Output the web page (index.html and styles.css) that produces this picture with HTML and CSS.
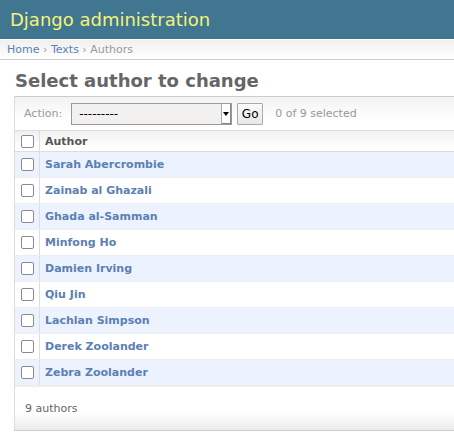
FILE: index.html
```html
<!DOCTYPE html>
<html>
<head>
<meta charset="utf-8">
<title>Select author to change | Django site admin</title>
<link rel="stylesheet" href="styles.css">
</head>
<body>
<div class="header">
  <h1 class="branding">Django administration</h1>
</div>
<div class="breadcrumbs"><a href="#">Home</a> › <a href="#">Texts</a> › Authors</div>
<div class="content">
  <h1 class="title">Select author to change</h1>
  <div class="module">
    <div class="actions">
      <label class="action-label">Action:</label>
      <span class="select-wrap">
        <select class="action-select"><option>---------</option></select>
        <span class="select-arrow"></span>
      </span>
      <button class="go-button" type="button">Go</button>
      <span class="counter">0 of 9 selected</span>
    </div>
    <table class="result-list">
      <thead>
        <tr><th class="cb-col"><input type="checkbox" class="cb"></th><th class="name-col">Author</th></tr>
      </thead>
      <tbody>
        <tr class="row1"><td class="cb-col"><input type="checkbox" class="cb"></td><td class="name-col"><a href="#">Sarah Abercrombie</a></td></tr>
        <tr class="row2"><td class="cb-col"><input type="checkbox" class="cb"></td><td class="name-col"><a href="#">Zainab al Ghazali</a></td></tr>
        <tr class="row1"><td class="cb-col"><input type="checkbox" class="cb"></td><td class="name-col"><a href="#">Ghada al-Samman</a></td></tr>
        <tr class="row2"><td class="cb-col"><input type="checkbox" class="cb"></td><td class="name-col"><a href="#">Minfong Ho</a></td></tr>
        <tr class="row1"><td class="cb-col"><input type="checkbox" class="cb"></td><td class="name-col"><a href="#">Damien Irving</a></td></tr>
        <tr class="row2"><td class="cb-col"><input type="checkbox" class="cb"></td><td class="name-col"><a href="#">Qiu Jin</a></td></tr>
        <tr class="row1"><td class="cb-col"><input type="checkbox" class="cb"></td><td class="name-col"><a href="#">Lachlan Simpson</a></td></tr>
        <tr class="row2"><td class="cb-col"><input type="checkbox" class="cb"></td><td class="name-col"><a href="#">Derek Zoolander</a></td></tr>
        <tr class="row1"><td class="cb-col"><input type="checkbox" class="cb"></td><td class="name-col"><a href="#">Zebra Zoolander</a></td></tr>
      </tbody>
    </table>
    <p class="paginator">9 authors</p>
  </div>
</div>
</body>
</html>
```
FILE: styles.css
```css
html { overflow: hidden; }
body {
  margin: 0;
  font-family: "DejaVu Sans", "Liberation Sans", sans-serif;
  font-size: 11px;
  color: #333;
  background: #fff;
}
a { color: #5b80b2; text-decoration: none; }

.header {
  background: #417690;
  height: 39px;
  display: flex;
  align-items: center;
}
.branding {
  margin: 0;
  padding: 0 10px;
  font-size: 18px;
  font-weight: normal;
  color: #f4f379;
  line-height: 22px;
}

.breadcrumbs {
  border-top: 1px solid #fff;
  border-bottom: 1px solid #ccc;
  background: linear-gradient(#f0f0f0, #fff);
  color: #999;
  font-size: 11px;
  height: 19px;
  line-height: 19px;
  padding: 0 7px;
}

.content {
  padding: 0 0 0 14px;
}
.title {
  margin: 10px 0 0 1px;
  height: 26px;
  font-size: 18px;
  line-height: 22px;
  font-weight: bold;
  color: #666;
}

.module {
  border: 1px solid #ccc;
  border-left-color: #ddd;
  border-right: none;
  background: #fff;
}

.actions {
  height: 33px;
  border-bottom: 1px solid #ddd;
  background: linear-gradient(#f3f3f3, #fff 70%);
  display: flex;
  align-items: center;
  padding-left: 9px;
  color: #999;
}
.action-label { margin-right: 9px; }
.select-wrap {
  position: relative;
  display: inline-block;
  width: 161px;
  height: 22px;
}
.action-select {
  -webkit-appearance: none;
  appearance: none;
  box-sizing: border-box;
  width: 100%;
  height: 100%;
  margin: 0;
  border: 1px solid #999;
  border-radius: 0;
  background: #f2f1f0;
  font-family: "DejaVu Sans", sans-serif;
  font-size: 12px;
  color: #000;
  padding: 0 0 0 7px;
}
.select-arrow {
  position: absolute;
  right: 1px;
  top: 1px;
  bottom: 1px;
  width: 9px;
  background: #fff;
  border-left: 1px solid #aaa;
  box-shadow: inset -1px -1px 0 #888;
}
.select-arrow::after {
  content: "";
  position: absolute;
  left: 1px;
  top: 8px;
  border-left: 3.5px solid transparent;
  border-right: 3.5px solid transparent;
  border-top: 4px solid #000;
}
.go-button {
  margin-left: 5px;
  width: 26px;
  height: 22px;
  padding: 0;
  border: 1px solid #aaa;
  border-radius: 1px;
  background: linear-gradient(#fafafa, #e8e8e8);
  font-family: "DejaVu Sans", sans-serif;
  font-size: 12px;
  color: #000;
}
.counter { margin-left: 12px; font-size: 11px; color: #999; }

.result-list {
  width: 100%;
  border-collapse: collapse;
}
.result-list th,
.result-list td {
  padding: 0;
  font-size: 11px;
  text-align: left;
  vertical-align: middle;
}
.result-list thead th {
  height: 20px;
  border-bottom: 1px solid #ddd;
  background: linear-gradient(#f0f0f0, #fff 80%);
  color: #555;
  font-weight: bold;
}
.result-list td {
  height: 25px;
  border-bottom: 1px solid #eee;
}
.result-list .cb-col {
  width: 18px;
  border-right: 1px solid #ddd;
  padding-left: 6px;
  box-sizing: content-box;
}
.result-list .name-col { padding-left: 5px; }
.result-list td a { font-weight: bold; }
.row1 { background: #edf3fe; }
.row2 { background: #fff; }

.cb {
  -webkit-appearance: none;
  appearance: none;
  display: block;
  box-sizing: border-box;
  width: 13px;
  height: 13px;
  margin: 0;
  border: 1px solid #8a8a8a;
  border-radius: 2px;
  background: #fff;
}

.paginator {
  margin: 0;
  height: 44px;
  line-height: 44px;
  padding-left: 10px;
  color: #666;
  background: linear-gradient(#fff 60%, #eaeaea);
  border-top: 1px solid #eee;
  box-sizing: border-box;
}
```
